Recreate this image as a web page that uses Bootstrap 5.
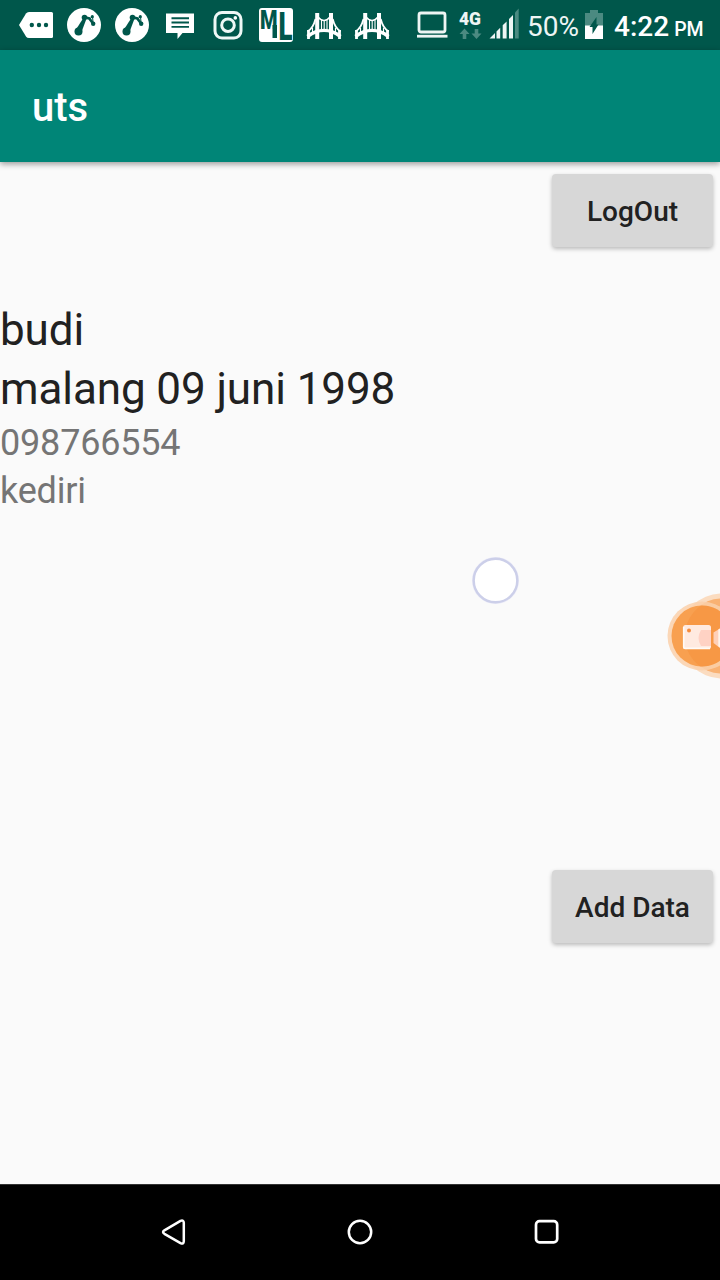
<!DOCTYPE html>
<html lang="id">
<head>
<meta charset="utf-8">
<meta name="viewport" content="width=device-width, initial-scale=1">
<title>uts</title>
<link href="https://cdn.jsdelivr.net/npm/bootstrap@5.3.0/dist/css/bootstrap.min.css" rel="stylesheet">
<style>
body{font-family:Roboto,"Noto Sans",sans-serif;background:#fafafa;color:#212121;height:1280px;overflow:hidden}
svg{display:block;flex:none}
.status{height:50px;background:#00574b;color:#eef5f4;padding-left:12px;font-size:28px;line-height:50px}
.pct{width:51px;margin-left:5px;margin-top:2px}
.battery{margin-left:5px}
.clock{font-weight:500;margin-top:2px;margin-left:9px;color:#fff}
.clock span{font-size:19.5px;margin-left:5px}
.net{margin-left:-16px}
.signal{margin-left:1px}
.appbar{height:112px;background:#008577;padding:4px 32px 0;box-shadow:0 2px 6px rgba(0,0,0,.4);z-index:1}
.appbar h1{font-size:40px;font-weight:500;color:#fff}
.act{width:161px;height:73px;border:0;border-radius:4px;background:#d7d7d7;color:#212121;font-size:28px;font-weight:500;margin-right:7px;padding:2px 0 0;box-shadow:0 2px 4px rgba(0,0,0,.26)}
.act:hover{background:#d7d7d7;color:#212121}
.top-act{margin-top:12px}
.record{margin-top:54px}
.big{font-size:44px;line-height:59px;letter-spacing:-.1px}
.sub{font-size:36px;line-height:48px;color:#757575;letter-spacing:-.19px}
.add-row{margin-top:355px}
.touch{left:469px;top:554px}
.rec{left:664px;top:588px}
.navkeys{height:96px;background:#000;padding-left:149px;padding-bottom:2px;gap:138px;border-top:1px solid #333}
</style>
<script src="https://cdn.jsdelivr.net/npm/bootstrap@5.3.0/dist/js/bootstrap.bundle.min.js"></script>
</head>
<body class="d-flex flex-column position-relative">
<svg width="0" height="0" class="position-absolute" aria-hidden="true">
  <symbol id="phone" viewBox="0 0 48 50">
    <circle cx="24" cy="25" r="17" fill="#fff"/>
    <g fill="#00574b" stroke="#00574b" stroke-linecap="round">
      <circle cx="18.500" cy="31.500" r="4" stroke="none"/><circle cx="24.500" cy="17.500" r="2.800" stroke="none"/><circle cx="33.200" cy="23.700" r="2.200" stroke="none"/><circle cx="32.300" cy="16.700" r="1.600" stroke="none"/>
      <path d="M16 29.500l7-11 3.200 1-4.500 12z" stroke="none"/>
      <path d="M24.500 17.200l4.800 1.300 3.600 4.700" fill="none" stroke-width="2.600"/><path d="M29.500 19l3-2.300.6 6" fill="none" stroke-width="1"/>
    </g>
  </symbol>
  <symbol id="bridge" viewBox="0 0 48 50">
    <g stroke="#fff" fill="none">
      <path d="M17.200 13v26M31 13v26" stroke-width="4"/>
      <path d="M15.500 19C14 25 11 29.500 7.500 31.500M32.700 19c1.500 6 4.500 10.500 8 12.500" stroke-width="1.800"/>
      <path d="M7.500 36.500C18 28.500 30 28.500 40.500 36.500" stroke-width="3.500"/>
      <path d="M8.500 30v9M39.500 30v9" stroke-width="2.800"/>
      <path d="M18 17q6 7 12 0" stroke-width="1.500"/>
      <path d="M21.500 19v11M24.200 20v10M27 19v11M12.500 28v5M35.500 28v5" stroke-width="1.100"/>
    </g>
  </symbol>
</svg>

<header class="status d-flex">
  <svg width="48" height="50"><path d="M7 25l7-11.500Q15 12 17 12H39.500Q41 12 41 13.500V36.500Q41 38 39.500 38H17Q15 38 14 36.500z" fill="#fff"/><g fill="#00574b"><circle cx="19.800" cy="25" r="2.200"/><circle cx="27" cy="25" r="2.200"/><circle cx="34" cy="25" r="2.200"/></g></svg>
  <svg width="48" height="50"><use href="#phone"/></svg>
  <svg width="48" height="50"><use href="#phone"/></svg>
  <svg width="48" height="50"><path d="M10 13.500H38V33H26.500L21.500 39V33H10z" fill="#fff"/><path d="M15.500 18.200H33M15.500 22.500H33M15.500 26.900H33" stroke="#00574b" stroke-width="1.900"/></svg>
  <svg width="48" height="50"><g fill="none" stroke="#eef8f6" stroke-width="3"><rect x="11" y="12.500" width="26" height="25.500" rx="7"/><circle cx="24" cy="25.200" r="6.300"/></g><circle cx="31.300" cy="17.900" r="1.800" fill="#fff"/></svg>
  <svg width="48" height="50"><rect x="7" y="8" width="34" height="34" rx="3" fill="#fff"/><text fill="#00574b" font-family="Roboto,sans-serif" font-weight="900"><tspan x="8" y="29" font-size="26" textLength="17.500" lengthAdjust="spacingAndGlyphs">M</tspan><tspan x="26.500" y="39.500" font-size="39" textLength="14" lengthAdjust="spacingAndGlyphs">L</tspan></text><path d="M20.500 25h4.500v13h-4.500z" fill="#00574b"/></svg>
  <svg width="48" height="50"><use href="#bridge"/></svg>
  <svg width="48" height="50"><use href="#bridge"/></svg>
  <svg width="60" height="50" class="ms-3"><rect x="7" y="13" width="26" height="19" rx="2" fill="none" stroke="#eef5f4" stroke-width="2.800"/><path d="M5 36.200H35.500" stroke="#eef5f4" stroke-width="2.800"/></svg>
  <svg width="30" height="50" class="net"><text x="3" y="25" font-family="Roboto,sans-serif" font-size="17.500" font-weight="900" fill="#eef5f4" textLength="22" lengthAdjust="spacingAndGlyphs">4G</text><path d="M3.500 34l5-5.500 5 5.500h-3.200v5H6.700v-5zM15.500 33.500h3.200v-4.500h3.600v4.500h3.200l-5 5.500z" fill="#4b8a81"/></svg>
  <svg width="35" height="50" class="signal"><path d="M2.500 38.500l5.500-5.500v5.500zM9.500 38.500V31.500l3.700-3.700v10.700zM15.700 38.500V25.300l3.900-3.900v17.100zM22 38.500V19l4-4v23.500z" fill="#eef5f4"/><path d="M28 38.500V12.500l3.700-4v30z" fill="#4b8a81"/></svg>
  <div class="pct">50%</div>
  <svg width="22" height="50" class="battery"><path d="M2 13h5v-3h8v3h5v13H2z" fill="#4b8a81"/><path d="M2 25.500h18V39H2z" fill="#fff"/><path d="M13.500 17v7.500h2L9.500 34v-7h-3z" fill="#00574b"/></svg>
  <div class="clock text-nowrap">4:22<span>PM</span></div>
</header>

<nav class="appbar d-flex align-items-center"><h1 class="m-0">uts</h1></nav>

<main class="flex-grow-1">
  <div class="d-flex justify-content-end"><button class="btn act top-act">LogOut</button></div>
  <div class="record">
    <div class="big">budi</div>
    <div class="big">malang 09 juni 1998</div>
    <div class="sub">098766554</div>
    <div class="sub">kediri</div>
  </div>
  <div class="add-row d-flex justify-content-end"><button class="btn act">Add Data</button></div>
</main>

<!-- touch pointer and screen recorder bubble float over the page -->
<svg class="touch position-absolute" width="53" height="53"><circle cx="26.500" cy="26.500" r="23.500" fill="#e9e9f7"/><circle cx="26.500" cy="26.500" r="21.800" fill="#fff" stroke="#cccfe9" stroke-width="2.400"/></svg>
<svg class="rec position-absolute" width="56" height="96">
  <circle cx="58" cy="48" r="42.500" fill="#fbdcc0"/><circle cx="58" cy="48" r="37.500" fill="#f9b273"/>
  <circle cx="38" cy="48" r="34.500" fill="#fad0aa" fill-opacity=".85"/><circle cx="38" cy="48" r="30.500" fill="#f8a050"/>
  <path d="M37 17.500A37.500 37.500 0 0 0 36 78.400 30.500 30.500 0 0 0 56 72.600V23.400A30.500 30.500 0 0 0 37 17.500z" fill="#f48b35" fill-opacity=".4"/>
  <rect x="19" y="37" width="28" height="24" rx="2.500" fill="#ffeae0"/><path d="M37 42h10v16H37q-5-8 0-16z" fill="#ffc8b8" fill-opacity=".7"/>
  <path d="M19.700 39v20q0 1.400 1.400 1.400H46" fill="none" stroke="#fffaf6" stroke-width="1.600"/>
  <circle cx="25" cy="42.500" r="2" fill="#f58b3c"/><path d="M49.500 44.500L56 40.500V60l-6.500-5z" fill="#ffd0b8"/><path d="M54.300 41.500l1.700-1v19l-1.700-1.200z" fill="#fff3ea"/>
</svg>

<footer class="navkeys d-flex align-items-center">
  <svg width="48" height="48" fill="none" stroke="#fff" stroke-width="2.500" stroke-linejoin="round"><path d="M15.400 22.300L31.500 12.900Q34.700 11.600 34.800 14.900V33.200Q34.700 36.500 31.500 35.100L15.400 25.800Q12.700 24 15.400 22.300z"/></svg>
  <svg width="48" height="48" fill="none" stroke="#fff" stroke-width="2.500"><circle cx="25" cy="24" r="11.200"/></svg>
  <svg width="48" height="48" fill="none" stroke="#fff" stroke-width="2.700"><rect x="15" y="13.200" width="21.200" height="21.200" rx="3.500"/></svg>
</footer>
</body>
</html>
